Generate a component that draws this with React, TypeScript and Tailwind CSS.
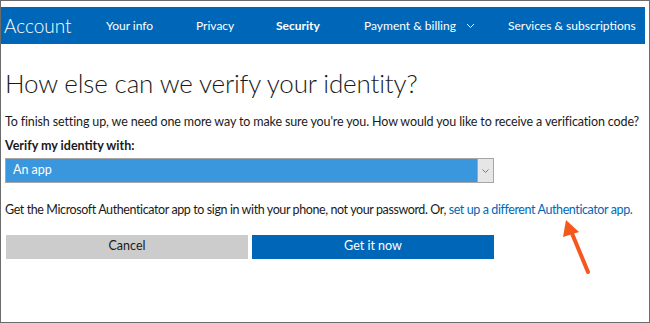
import React from 'react';

const font = "font-['Segoe_UI','Lato',sans-serif]";

export default function App() {
  return (
    <div className={`relative w-[650px] h-[323px] bg-white border border-[#6b6b6b] pt-[6px] overflow-hidden whitespace-nowrap ${font}`}>
      <nav className="flex items-center h-[37px] bg-[#0067b8] text-white mr-[4px]">
        <div className="text-[19px] font-light pl-[3px] w-[105px] leading-none">Account</div>
        <div className="flex items-center text-[12px] leading-none">
          <span className="w-[90px]">Your info</span>
          <span className="w-[80px]">Privacy</span>
          <span className="w-[88px] font-bold">Security</span>
          <span className="flex items-center w-[144px]">
            Payment &amp; billing
            <svg className="ml-[10px]" width="9" height="6" viewBox="0 0 9 6" fill="none">
              <path d="M1 1l3.5 3.5L8 1" stroke="white" strokeWidth="1" />
            </svg>
          </span>
          <span>Services &amp; subscriptions</span>
        </div>
      </nav>

      <main className="px-[4px] text-[#1a1a1a]">
        <h1 className="text-[26px] font-light leading-none mt-[26px] tracking-[-0.15px]">
          How else can we verify your identity?
        </h1>
        <p className="text-[12.5px] mt-[20px] leading-none tracking-[-0.13px]">
          To finish setting up, we need one more way to make sure you're you. How would you like to receive a verification code?
        </p>
        <div className="text-[12.5px] font-bold mt-[11px] leading-none">Verify my identity with:</div>
        <div className="mt-[6px] w-[489px] h-[25px] flex border border-[#a6a6a6] bg-[#3a96dd]">
          <div className="flex-1 flex items-center text-white text-[12.5px] pl-[7px]">An app</div>
          <div className="w-[16px] bg-[#e6e6e6] border-l border-[#a6a6a6] flex items-center justify-center">
            <svg width="7" height="4" viewBox="0 0 7 4" fill="none">
              <path d="M0.5 0.5l3 3 3-3" stroke="#777" strokeWidth="1" />
            </svg>
          </div>
        </div>
        <p className="text-[12.5px] mt-[21px] leading-none tracking-[-0.4px]">
          Get the Microsoft Authenticator app to sign in with your phone, not your password. Or,{' '}
          <span className="text-[#0067b8]">set up a different Authenticator app.</span>
        </p>
        <div className="flex gap-[4px] mt-[18px] pl-[1px]">
          <button className="w-[242px] h-[24px] bg-[#cccccc] text-[12.5px] text-[#1a1a1a]">Cancel</button>
          <button className="w-[242px] h-[24px] bg-[#0067b8] text-[12.5px] text-white">Get it now</button>
        </div>
      </main>

      <svg className="absolute left-[554px] top-[214px]" width="45" height="65" viewBox="0 0 45 65">
        <line x1="33" y1="57" x2="16" y2="16" stroke="#f4581c" strokeWidth="4" strokeLinecap="round" />
        <polygon points="11,5 24,17 8,22" fill="#f4581c" />
      </svg>
    </div>
  );
}
